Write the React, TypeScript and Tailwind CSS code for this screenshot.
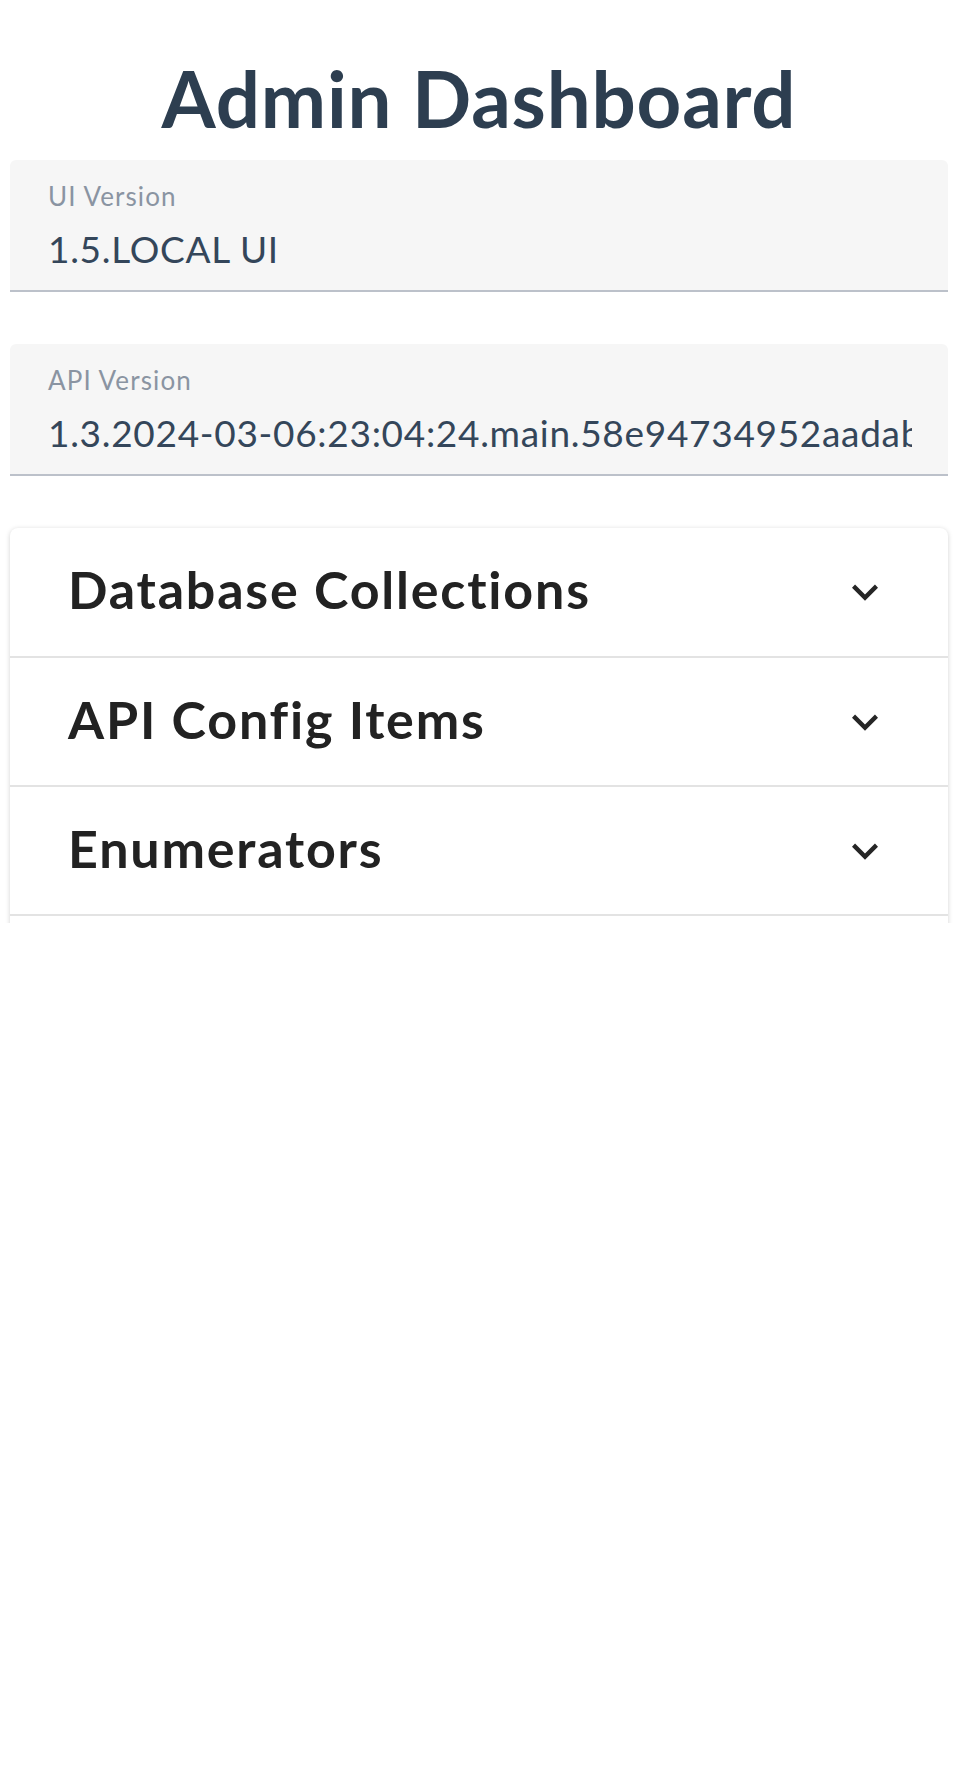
const fields = [
  { label: 'UI Version', value: '1.5.LOCAL UI' },
  { label: 'API Version', value: '1.3.2024-03-06:23:04:24.main.58e94734952aadab' },
];

const sections = ['Database Collections', 'API Config Items', 'Enumerators', 'Users'];

function ExpandIcon() {
  return (
    <svg viewBox="0 0 24 24" className="w-[52px] h-[52px] shrink-0" fill="#262626">
      <path d="M16.59 8.59 12 13.17 7.41 8.59 6 10l6 6 6-6z" />
    </svg>
  );
}

export default function App() {
  return (
    <div className="w-full bg-white" style={{ fontFamily: 'Lato, "Open Sans", sans-serif' }}>
      <div className="h-[923px] overflow-hidden pl-[10px] pr-[20px]">
        <h1 className="pt-[59px] h-[137px] text-center text-[78px] leading-none font-bold tracking-[0.8px] text-[#2d3e50]">Admin Dashboard</h1>

        {/* Version fields */}
        <div className="mt-[23px] flex flex-col gap-[52px]">
          {fields.map((f) => (
            <div key={f.label} className="h-[132px] rounded-t-[6px] bg-[#f6f6f6] border-b-2 border-[#bcc1ca] pl-[38px] pr-[36px] pt-[23px]">
              <div className="text-[26px] leading-none tracking-[1.1px] text-[#8a94a2]">{f.label}</div>
              <div className="mt-[21px] text-[37px] leading-none tracking-[0.7px] text-[#34465a] whitespace-nowrap overflow-hidden">{f.value}</div>
            </div>
          ))}
        </div>

        {/* Accordions */}
        <div className="mt-[52px] rounded-t-[8px] bg-white shadow-[0_1px_5px_rgba(0,0,0,0.18)]">
          {sections.map((s, i) => (
            <div key={s} className={i > 0 ? 'border-t-2 border-[#e3e3e3]' : ''}>
              <div className={`${i === 0 ? 'h-[128px]' : 'h-[127px]'} flex items-center justify-between pl-[58px] pr-[57px]`}>
                <span className="mb-[6px] text-[52px] leading-none font-bold tracking-[1.8px] text-[#222]">{s}</span>
                <ExpandIcon />
              </div>
            </div>
          ))}
        </div>
      </div>
    </div>
  );
}
